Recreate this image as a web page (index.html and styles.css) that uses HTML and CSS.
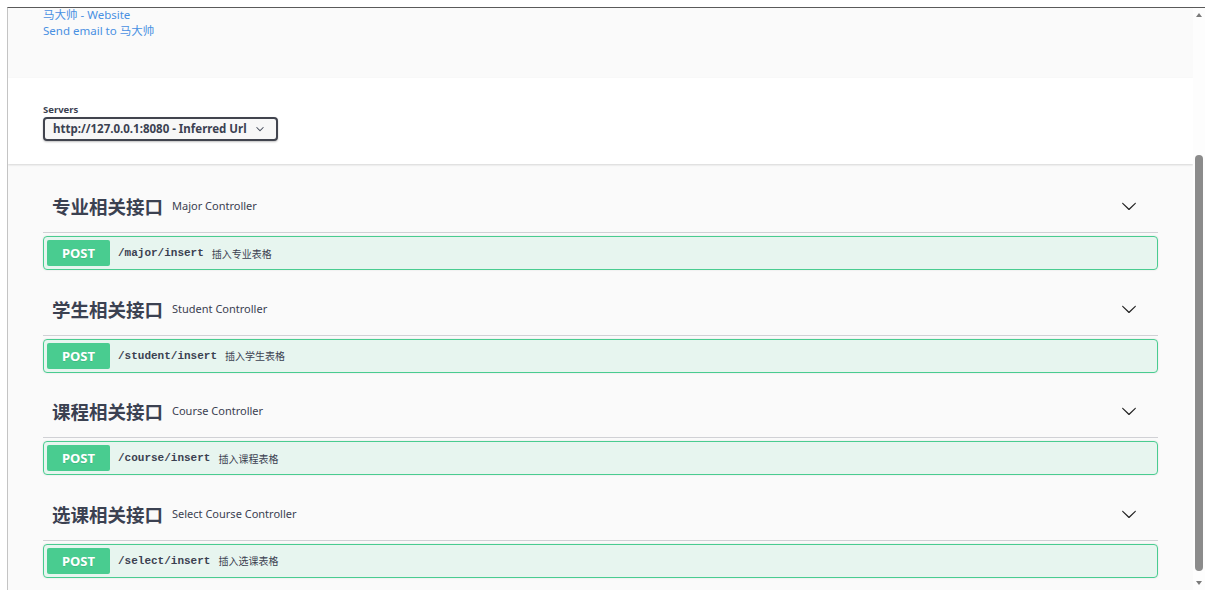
FILE: index.html
```html
<!DOCTYPE html>
<html lang="zh-CN">
<head>
<meta charset="utf-8">
<title>Swagger UI</title>
<link rel="stylesheet" href="styles.css">
</head>
<body>
<div class="window">
  <div class="page">
    <section class="info">
      <div class="wrapper links">
        <a class="link" href="#">马大帅 - Website</a>
        <a class="link" href="#">Send email to 马大帅</a>
      </div>
    </section>
    <section class="scheme">
      <div class="wrapper">
        <div class="servers-label">Servers</div>
        <div class="select">
          <span>http://127.0.0.1:8080 - Inferred Url</span>
          <svg class="select-chev" viewBox="0 0 20 20" width="10" height="10"><path d="M17.418 6.109c.272-.268.709-.268.979 0s.271.701 0 .969l-7.908 7.83c-.27.268-.707.268-.979 0l-7.908-7.83c-.27-.268-.27-.701 0-.969.271-.268.709-.268.979 0L10 13.25l7.418-7.141z" fill="#3b4151" stroke="#3b4151" stroke-width="1"/></svg>
        </div>
      </div>
    </section>
    <section class="tags wrapper">
      <div class="tag">
        <div class="tag-header">
          <h3 class="tag-name">专业相关接口</h3>
          <span class="tag-desc">Major Controller</span>
          <svg class="chev" viewBox="0 0 20 20" width="18" height="18"><path d="M17.418 6.109c.272-.268.709-.268.979 0s.271.701 0 .969l-7.908 7.83c-.27.268-.707.268-.979 0l-7.908-7.83c-.27-.268-.27-.701 0-.969.271-.268.709-.268.979 0L10 13.25l7.418-7.141z"/></svg>
        </div>
        <div class="op">
          <span class="method">POST</span>
          <span class="path">/major/insert</span>
          <span class="summary">插入专业表格</span>
        </div>
      </div>
      <div class="tag">
        <div class="tag-header">
          <h3 class="tag-name">学生相关接口</h3>
          <span class="tag-desc">Student Controller</span>
          <svg class="chev" viewBox="0 0 20 20" width="18" height="18"><path d="M17.418 6.109c.272-.268.709-.268.979 0s.271.701 0 .969l-7.908 7.83c-.27.268-.707.268-.979 0l-7.908-7.83c-.27-.268-.27-.701 0-.969.271-.268.709-.268.979 0L10 13.25l7.418-7.141z"/></svg>
        </div>
        <div class="op">
          <span class="method">POST</span>
          <span class="path">/student/insert</span>
          <span class="summary">插入学生表格</span>
        </div>
      </div>
      <div class="tag">
        <div class="tag-header">
          <h3 class="tag-name">课程相关接口</h3>
          <span class="tag-desc">Course Controller</span>
          <svg class="chev" viewBox="0 0 20 20" width="18" height="18"><path d="M17.418 6.109c.272-.268.709-.268.979 0s.271.701 0 .969l-7.908 7.83c-.27.268-.707.268-.979 0l-7.908-7.83c-.27-.268-.27-.701 0-.969.271-.268.709-.268.979 0L10 13.25l7.418-7.141z"/></svg>
        </div>
        <div class="op">
          <span class="method">POST</span>
          <span class="path">/course/insert</span>
          <span class="summary">插入课程表格</span>
        </div>
      </div>
      <div class="tag">
        <div class="tag-header">
          <h3 class="tag-name">选课相关接口</h3>
          <span class="tag-desc">Select Course Controller</span>
          <svg class="chev" viewBox="0 0 20 20" width="18" height="18"><path d="M17.418 6.109c.272-.268.709-.268.979 0s.271.701 0 .969l-7.908 7.83c-.27.268-.707.268-.979 0l-7.908-7.83c-.27-.268-.27-.701 0-.969.271-.268.709-.268.979 0L10 13.25l7.418-7.141z"/></svg>
        </div>
        <div class="op">
          <span class="method">POST</span>
          <span class="path">/select/insert</span>
          <span class="summary">插入选课表格</span>
        </div>
      </div>
    </section>
  </div>
  <div class="scrollbar">
    <div class="arrow arrow-up"></div>
    <div class="track"><div class="thumb"></div></div>
    <div class="arrow arrow-down"></div>
  </div>
</div>
</body>
</html>
```

FILE: styles.css
```css
* { box-sizing: border-box; }
html, body { margin: 0; padding: 0; background: #ffffff; }
body {
  font-family: "Noto Sans", "Open Sans", "Noto Sans CJK SC", sans-serif;
  color: #3b4151;
  padding: 7px 4px 0 7px;
}
.window {
  display: flex;
  height: 583px;
  border-top: 1px solid #5a5a5a;
  border-left: 1px solid #c4c4c4;
  background: #fafafa;
  overflow: hidden;
}
.page {
  flex: 1;
  overflow: hidden;
  background: #fafafa;
}
.wrapper { padding: 0 35px; }

.info { height: 70px; background: #fafafa; display: flow-root; }
.links { display: flex; flex-direction: column; margin-top: -1px; }
.link {
  color: #4990e2;
  text-decoration: none;
  font-size: 11.5px;
  line-height: 16px;
  font-family: "Noto Sans", "Noto Sans CJK SC", sans-serif;
  align-self: flex-start;
}

.scheme {
  height: 86px;
  background: #ffffff;
  box-shadow: 0 1px 2px 0 rgba(0,0,0,.15);
  padding-top: 25px;
  position: relative;
}
.servers-label {
  font-size: 9.5px;
  font-weight: 700;
  line-height: 13px;
  color: #3b4151;
}
.select {
  display: inline-flex;
  align-items: center;
  justify-content: space-between;
  width: 235px;
  height: 24px;
  border: 2px solid #41444e;
  border-radius: 4px;
  background: #f7f7f7;
  box-shadow: 0 1px 2px 0 rgba(0,0,0,.25);
  padding: 0 12px 0 8px;
  font-size: 11.5px;
  font-weight: 700;
  color: #3b4151;
}
.select-chev { width: 8px; height: 8px; }

.tags { padding-top: 4px; }
.tag { margin-bottom: 0.5px; }
.tag-header {
  display: flex;
  align-items: center;
  height: 65px;
  padding: 25px 21px 13px 9px;
  border-bottom: 1px solid rgba(59,65,81,.22);
}
.tag-name {
  margin: 0;
  font-family: "Noto Sans CJK SC", sans-serif;
  font-size: 18.5px;
  font-weight: 700;
  line-height: 26px;
  color: #3b4151;
}
.tag-desc {
  margin-left: 9px;
  font-size: 11px;
  line-height: 26px;
  color: #3b4151;
  flex: 1;
}
.chev { width: 16px; height: 16px; fill: #222; }

.op {
  display: flex;
  align-items: center;
  height: 34px;
  margin-top: 3px;
  padding: 0 3px;
  border: 1px solid #49cc90;
  border-radius: 4px;
  background: rgba(73,204,144,.1);
  box-shadow: 0 0 2px rgba(0,0,0,.12);
}
.method {
  width: 63px;
  height: 26px;
  display: flex;
  align-items: center;
  justify-content: center;
  background: #49cc90;
  color: #fff;
  border-radius: 2px;
  font-size: 13px;
  font-weight: 700;
  text-shadow: 0 1px 0 rgba(0,0,0,.1);
}
.path {
  margin-left: 8px;
  font-family: "Liberation Mono", "DejaVu Sans Mono", monospace;
  font-size: 11px;
  font-weight: 700;
  color: #3b4151;
}
.summary {
  margin-left: 8px;
  font-family: "Noto Sans CJK SC", sans-serif;
  font-size: 10px;
  color: #3b4151;
}

.scrollbar {
  width: 12px;
  display: flex;
  flex-direction: column;
  align-items: center;
  background: #fdfdfd;
}
.arrow { height: 14px; width: 100%; display: flex; align-items: center; justify-content: center; }
.arrow-up::before {
  content: "";
  border-left: 3.5px solid transparent;
  border-right: 3.5px solid transparent;
  border-bottom: 4px solid #7a7a7a;
}
.arrow-down::before {
  content: "";
  border-left: 3.5px solid transparent;
  border-right: 3.5px solid transparent;
  border-top: 4px solid #7a7a7a;
}
.track { flex: 1; width: 100%; display: flex; justify-content: center; }
.thumb {
  margin-top: 133px;
  width: 8px;
  height: 416px;
  border-radius: 4px;
  background: #8b8b8b;
}
```
